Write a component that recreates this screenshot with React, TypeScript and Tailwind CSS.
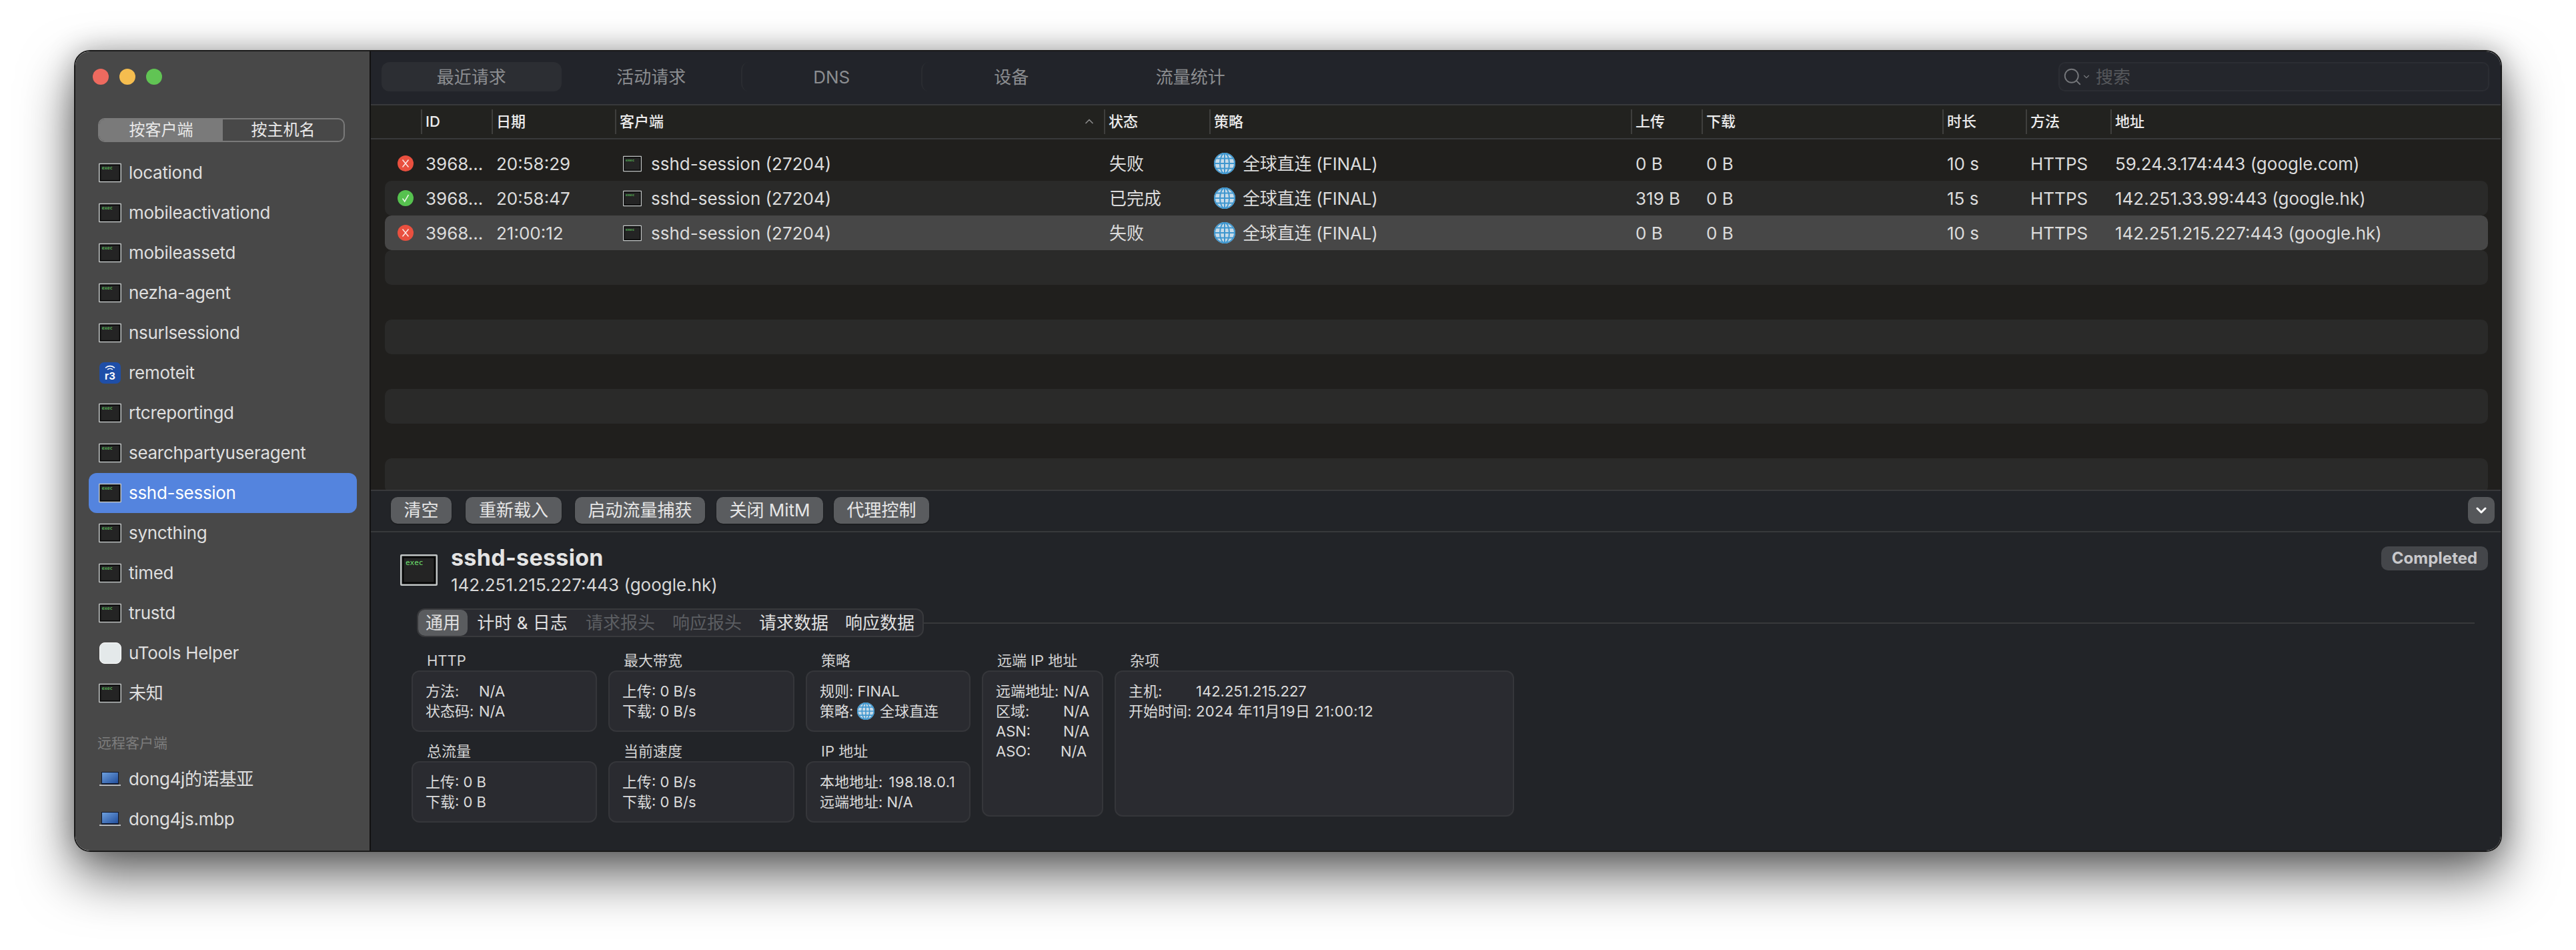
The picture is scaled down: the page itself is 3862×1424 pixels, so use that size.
import { ChevronDown, ChevronUp, Search } from "lucide-react";

const FONT = "font-['Inter','Noto_Sans_CJK_SC',sans-serif]";

const TABLE_COLS =
  "grid grid-cols-[54px_106px_185px_733px_158px_632px_106px_361px_125px_127px_1fr]";

const CLIENTS = [
  "locationd",
  "mobileactivationd",
  "mobileassetd",
  "nezha-agent",
  "nsurlsessiond",
  "remoteit",
  "rtcreportingd",
  "searchpartyuseragent",
  "sshd-session",
  "syncthing",
  "timed",
  "trustd",
  "uTools Helper",
  "未知",
];

const REQUESTS = [
  { ok: false, time: "20:58:29", status: "失败", up: "0 B", dur: "10 s", addr: "59.24.3.174:443 (google.com)" },
  { ok: true, time: "20:58:47", status: "已完成", up: "319 B", dur: "15 s", addr: "142.251.33.99:443 (google.hk)" },
  { ok: false, time: "21:00:12", status: "失败", up: "0 B", dur: "10 s", addr: "142.251.215.227:443 (google.hk)" },
];

const HEADERS = ["", "ID", "日期", "客户端", "状态", "策略", "上传", "下载", "时长", "方法", "地址"];

function ExecIcon({ width = 34, height = 30 }: { width?: number; height?: number }) {
  return (
    <svg width={width} height={height} viewBox="0 0 56 47" className="shrink-0">
      <rect width="56" height="47" rx="2" fill="#c2c6c6" />
      <rect x="2.500" y="2.500" width="51" height="42" fill="#060606" />
      <rect x="5.500" y="5.500" width="45" height="36" fill="#242424" />
      <text x="8" y="16" fontSize="11" fill="#6fe06f" fontFamily="DejaVu Sans Mono, monospace">
        exec
      </text>
    </svg>
  );
}

function RemoteitIcon() {
  return (
    <svg width="32" height="32" viewBox="0 0 32 32" className="shrink-0">
      <rect width="32" height="32" rx="7" fill="#1f4fa8" />
      <path d="M9 8.500a10 10 0 0 1 14 0M12 11a6 6 0 0 1 8 0" stroke="#fff" strokeWidth="1.600" fill="none" />
      <text x="16" y="26" fontSize="15" fontWeight="700" textAnchor="middle" fill="#fff" fontFamily="Inter, sans-serif">
        r3
      </text>
    </svg>
  );
}

function UtoolsIcon() {
  return <div className="w-[33px] h-[32px] shrink-0 rounded-[8px] bg-[#e4e9ea] border border-white" />;
}

function LaptopIcon() {
  return (
    <svg width="32" height="24" viewBox="0 0 32 24" className="shrink-0">
      <defs>
        <linearGradient id="screen" x1="0" y1="0" x2="1" y2="1">
          <stop offset="0" stopColor="#6ea0de" />
          <stop offset="1" stopColor="#234f9c" />
        </linearGradient>
      </defs>
      <rect x="3" y="1" width="26" height="19" fill="#11182b" />
      <rect x="4" y="2" width="24" height="16" fill="url(#screen)" />
      <rect x="0" y="20" width="32" height="2" fill="#b9bcc0" />
    </svg>
  );
}

function GlobeIcon({ size = 32 }: { size?: number }) {
  return (
    <svg width={size} height={size} viewBox="0 0 32 32" className="shrink-0">
      <circle cx="16" cy="16" r="16" fill="#c8dbe8" />
      <g stroke="#3f97cf" strokeWidth="2" fill="none">
        <circle cx="16" cy="16" r="15" />
        <ellipse cx="16" cy="16" rx="7" ry="15" />
        <path d="M16 1v30M1 16h30M3.500 8.500h25M3.500 23.500h25" />
      </g>
    </svg>
  );
}

function StatusIcon({ ok }: { ok: boolean }) {
  return (
    <svg width="24" height="24" viewBox="0 0 24 24">
      <circle cx="12" cy="12" r="12" fill={ok ? "#56c24f" : "#e9503f"} />
      {ok ? (
        <path d="M7.500 12.500l3.200 4.500 5.800-10" stroke="#eaf8e8" strokeWidth="1.500" fill="none" />
      ) : (
        <path d="M7.500 6.500l9 11M16.500 6.500l-9 11" stroke="#fbe6e3" strokeWidth="1.500" fill="none" />
      )}
    </svg>
  );
}

function SidebarRow({ name, selected }: { name: string; selected?: boolean }) {
  let icon = <ExecIcon />;
  if (name === "remoteit") icon = <RemoteitIcon />;
  if (name === "uTools Helper") icon = <UtoolsIcon />;
  return (
    <div
      className={`h-[60px] flex items-center gap-[11px] pl-[15px] rounded-[12px] ${
        selected ? "bg-[#5484de] text-white" : "text-[#dfdfdf]"
      }`}
    >
      <div className="w-[34px] flex justify-center">{icon}</div>
      <span className="text-[26px] leading-none tracking-[-0.3px]">{name}</span>
    </div>
  );
}

function Sidebar() {
  return (
    <aside className="w-[443px] shrink-0 bg-[#484848] border-r-2 border-[#111] flex flex-col">
      <div className="flex gap-[16px] pl-[26px] pt-[26px]">
        <div className="w-[24px] h-[24px] rounded-full bg-[#ee6a5f]" />
        <div className="w-[24px] h-[24px] rounded-full bg-[#f5bd4f]" />
        <div className="w-[24px] h-[24px] rounded-full bg-[#61c454]" />
      </div>
      <div className="ml-[34px] mt-[50px] w-[370px] h-[36px] flex rounded-[10px] border-2 border-[#7a7a7a] text-[24px] text-[#e8e8e8] overflow-hidden">
        <div className="w-[185px] bg-[#7a7a7a] flex items-center justify-center">按客户端</div>
        <div className="flex-1 flex items-center justify-center">按主机名</div>
      </div>
      <div className="mx-[20px] w-[402px] mt-[16px]">
        {CLIENTS.map(name => (
          <SidebarRow key={name} name={name} selected={name === "sshd-session"} />
        ))}
      </div>
      <div className="pl-[33px] mt-[30px] text-[21px] leading-[30px] text-[#7d7d7d]">远程客户端</div>
      <div className="mx-[20px] w-[402px] mt-[9px] text-[#dfdfdf]">
        {["dong4j的诺基亚", "dong4js.mbp"].map(name => (
          <div key={name} className="h-[60px] flex items-center gap-[11px] pl-[15px]">
            <div className="w-[34px] flex justify-center">
              <LaptopIcon />
            </div>
            <span className="text-[26px] leading-none tracking-[-0.3px]">{name}</span>
          </div>
        ))}
      </div>
    </aside>
  );
}

function TopTabs() {
  const tabs = ["最近请求", "活动请求", "DNS", "设备", "流量统计"];
  return (
    <div className="h-[81px] shrink-0 bg-[#22242a] border-b-2 border-[#38393b] flex items-start pt-[16px] pl-[16px] pr-[17px]">
      {tabs.map((tab, i) => (
        <div
          key={tab}
          className={`w-[269.5px] h-[44px] flex items-center justify-center text-[26px] text-[#8b8d90] rounded-[12px] ${
            i === 0 ? "bg-[#2c2e33]" : ""
          } ${i === 2 || i === 3 ? "border-l-2 border-[#2a2c31]" : ""}`}
        >
          {tab}
        </div>
      ))}
      <div className="ml-auto w-[646px] h-[44px] rounded-[10px] bg-[#24262c] border-2 border-[#2b2d33] flex items-center pl-[4px] text-[26px] text-[#55575b]">
        <Search size={30} strokeWidth={1.5} className="text-[#75777b]" />
        <ChevronDown size={14} strokeWidth={2} className="text-[#75777b] -ml-[1px] mr-[7px]" />
        搜索
      </div>
    </div>
  );
}

function RequestTable() {
  return (
    <div className="h-[578px] shrink-0 bg-[#201f1d] border-b-2 border-[#38393b] overflow-hidden">
      <div className="h-[51px] bg-[#22221f] border-b-2 border-[#38393b] px-[21px]">
        <div className={`${TABLE_COLS} h-full`}>
          {HEADERS.map((h, i) => (
            <div key={i} className="relative flex items-center text-[22px] font-medium text-[#ececec]">
              {i > 0 && <span className="absolute left-0 top-[6px] bottom-[6px] w-[2px] bg-[#3f3f3d]" />}
              <span className="pl-[7px]">{h}</span>
              {i === 3 && (
                <ChevronUp size={20} strokeWidth={2} className="absolute right-[12px] top-[14px] text-[#8c8c8c]" />
              )}
            </div>
          ))}
        </div>
      </div>
      <div className="pt-[10px] pl-[21px] pr-[19px]">
        {REQUESTS.map((r, i) => (
          <div
            key={r.time}
            className={`${TABLE_COLS} h-[52px] items-center rounded-[10px] text-[26px] text-[#dcdcdc] ${
              i === 1 ? "bg-[#2a2a29]" : i === 2 ? "bg-[#474747]" : ""
            }`}
          >
            <div className="pl-[19px] flex">
              <StatusIcon ok={r.ok} />
            </div>
            <div className="pl-[7px]">3968...</div>
            <div className="pl-[7px]">{r.time}</div>
            <div className="pl-[12px] flex items-center gap-[14px]">
              <ExecIcon width={28} height={25} />
              sshd-session (27204)
            </div>
            <div className="pl-[8px]">{r.status}</div>
            <div className="pl-[7px] flex items-center gap-[11px]">
              <GlobeIcon />
              <span className="tracking-[-0.2px]">全球直连 (FINAL)</span>
            </div>
            <div className="pl-[7px]">{r.up}</div>
            <div className="pl-[7px]">0 B</div>
            <div className="pl-[7px]">{r.dur}</div>
            <div className="pl-[7px]">HTTPS</div>
            <div className="pl-[7px] whitespace-nowrap">{r.addr}</div>
          </div>
        ))}
        {[0, 1, 2, 3].map(i => (
          <div key={i} className="h-[52px] rounded-[10px] bg-[#2a2a29] mb-[52px]" />
        ))}
      </div>
    </div>
  );
}

function Toolbar() {
  const buttons = [
    { label: "清空", cls: "w-[91px]" },
    { label: "重新载入", cls: "w-[144px] ml-[21px]" },
    { label: "启动流量捕获", cls: "w-[195px] ml-[20px]" },
    { label: "关闭 MitM", cls: "w-[160px] ml-[17px]" },
    { label: "代理控制", cls: "w-[143px] ml-[16px]" },
  ];
  return (
    <div className="h-[62px] shrink-0 bg-[#222428] border-b-2 border-[#38393b] flex items-center pl-[30px] pr-[9px] pb-[2px]">
      {buttons.map(b => (
        <button
          key={b.label}
          className={`${b.cls} h-[40px] rounded-[10px] bg-[#5a5c5f] text-[26px] leading-none text-[#e6e6e6] whitespace-nowrap shadow-[0_1px_2px_rgba(0,0,0,0.4)]`}
        >
          {b.label}
        </button>
      ))}
      <button className="ml-auto w-[40px] h-[40px] rounded-[10px] bg-[#55575a] flex items-center justify-center text-white">
        <ChevronDown size={24} strokeWidth={3} />
      </button>
    </div>
  );
}

function InfoCard({
  title,
  className,
  children,
}: {
  title: string;
  className: string;
  children: React.ReactNode;
}) {
  return (
    <div className={`${className} flex flex-col`}>
      <div className="h-[30px] shrink-0 pl-[23px] text-[22px] leading-[30px] text-[#d4d4d4]">{title}</div>
      <div className="flex-1 rounded-[12px] bg-[#2a2b30] border-2 border-[#35363a] pl-[19px] pt-[14px] text-[22px] leading-[30px] text-[#dcdcdc]">
        {children}
      </div>
    </div>
  );
}

function KV({ k, v, w }: { k: string; v: React.ReactNode; w: number }) {
  return (
    <div className="flex items-center whitespace-nowrap">
      <span style={{ width: w }} className="shrink-0">
        {k}
      </span>
      <span className="flex items-center gap-[8px]">{v}</span>
    </div>
  );
}

function Detail() {
  const tabs = [
    { label: "计时 & 日志", w: 164, off: false },
    { label: "请求报头", w: 130, off: true },
    { label: "响应报头", w: 130, off: true },
    { label: "请求数据", w: 130, off: false },
    { label: "响应数据", w: 128, off: false },
  ];
  return (
    <div className="flex-1 bg-[#222428] relative pl-[44px] pt-[18px]">
      <div className="flex gap-[20px] h-[96px]">
        <div className="pt-[15px]">
          <ExecIcon width={56} height={47} />
        </div>
        <div>
          <div className="text-[34px] leading-[40px] font-bold tracking-[0.3px] text-[#e4e4e4]">sshd-session</div>
          <div className="text-[26px] leading-[42px] text-[#d8d8d8]">142.251.215.227:443 (google.hk)</div>
        </div>
      </div>
      <div className="absolute right-[19px] top-[21px] h-[36px] w-[160px] rounded-[10px] bg-[#44464a] flex items-center justify-center text-[24px] font-bold text-[#c9c9cc]">
        Completed
      </div>
      <div className="relative ml-[25px] mr-[39px] h-[43px] flex items-center">
        <div className="absolute left-0 right-0 top-[21px] h-[2px] bg-[#38393b]" />
        <div className="relative h-[43px] flex items-center rounded-[12px] bg-[#2a2b30] border-2 border-[#38393c] text-[26px] text-[#e0e0e0]">
          <div className="w-[74px] h-full rounded-[10px] bg-[#5a5c5f] flex items-center justify-center">通用</div>
          {tabs.map(t => (
            <div
              key={t.label}
              style={{ width: t.w }}
              className={`flex items-center justify-center whitespace-nowrap ${t.off ? "text-[#5c5e62]" : ""}`}
            >
              {t.label}
            </div>
          ))}
        </div>
      </div>
      <div className="ml-[17px] mt-[20px] flex gap-[17px]">
        <div className="flex flex-col gap-[14px]">
          <div className="flex gap-[17px]">
            <InfoCard title="HTTP" className="w-[278px] h-[122px]">
              <KV k="方法:" v="N/A" w={80} />
              <KV k="状态码:" v="N/A" w={80} />
            </InfoCard>
            <InfoCard title="最大带宽" className="w-[279px] h-[122px]">
              <div>上传: 0 B/s</div>
              <div>下载: 0 B/s</div>
            </InfoCard>
            <InfoCard title="策略" className="w-[247px] h-[122px]">
              <div>规则: FINAL</div>
              <KV k="策略:" w={56} v={<><GlobeIcon size={26} />全球直连</>} />
            </InfoCard>
          </div>
          <div className="flex gap-[17px]">
            <InfoCard title="总流量" className="w-[278px] h-[122px]">
              <div>上传: 0 B</div>
              <div>下载: 0 B</div>
            </InfoCard>
            <InfoCard title="当前速度" className="w-[279px] h-[122px]">
              <div>上传: 0 B/s</div>
              <div>下载: 0 B/s</div>
            </InfoCard>
            <InfoCard title="IP 地址" className="w-[247px] h-[122px]">
              <div className="whitespace-nowrap">
                本地地址: <span className="ml-[3px] tracking-[0.5px]">198.18.0.1</span>
              </div>
              <div>远端地址: N/A</div>
            </InfoCard>
          </div>
        </div>
        <InfoCard title="远端 IP 地址" className="w-[182px] h-[249px]">
          <KV k="远端地址:" v="N/A" w={101} />
          <KV k="区域:" v="N/A" w={101} />
          <KV k="ASN:" v="N/A" w={101} />
          <KV k="ASO:" v="N/A" w={97} />
        </InfoCard>
        <InfoCard title="杂项" className="w-[599px] h-[249px]">
          <KV k="主机:" v="142.251.215.227" w={101} />
          <KV k="开始时间:" v={<span className="tracking-[0.35px]">2024 年11月19日 21:00:12</span>} w={101} />
        </InfoCard>
      </div>
    </div>
  );
}

export default function App() {
  return (
    <div className={`${FONT} w-[3862px] h-[1424px] bg-white pl-[111px] pt-[75px] overflow-hidden`}>
      <div className="w-[3640px] h-[1202px] flex rounded-[24px] overflow-hidden border-2 border-[#1a1a1a] shadow-[0_36px_80px_rgba(0,0,0,0.6),0_0_40px_rgba(0,0,0,0.25)]">
        <Sidebar />
        <main className="flex-1 min-w-0 flex flex-col">
          <TopTabs />
          <RequestTable />
          <Toolbar />
          <Detail />
        </main>
      </div>
    </div>
  );
}
